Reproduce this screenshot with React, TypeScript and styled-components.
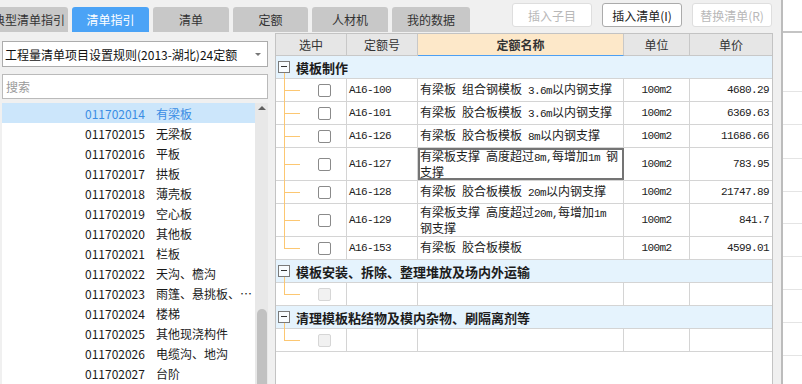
import * as React from 'react';
import styled, { createGlobalStyle } from 'styled-components';

const GlobalStyle = createGlobalStyle`
  html, body {
    margin: 0;
    padding: 0;
  }
  body {
    font-family: "Noto Sans CJK SC", "Liberation Sans", sans-serif;
    font-size: 12px;
    color: #222;
    background: #f0f0f0;
  }
  * {
    box-sizing: border-box;
  }
`;

interface QuotaRow {
  code: string;
  name: string[];
  unit: string;
  price: string;
  tall?: boolean;
  selected?: boolean;
}

interface QuotaGroup {
  title: string;
  rows: QuotaRow[];
}

const tabs = [
  { label: '典型清单指引', w: 78 },
  { label: '清单指引', w: 77, active: true },
  { label: '清单', w: 76 },
  { label: '定额', w: 75 },
  { label: '人材机', w: 76 },
  { label: '我的数据', w: 78 },
];

const items = [
  ['011702014', '有梁板'],
  ['011702015', '无梁板'],
  ['011702016', '平板'],
  ['011702017', '拱板'],
  ['011702018', '薄壳板'],
  ['011702019', '空心板'],
  ['011702020', '其他板'],
  ['011702021', '栏板'],
  ['011702022', '天沟、檐沟'],
  ['011702023', '雨篷、悬挑板、阳台板'],
  ['011702024', '楼梯'],
  ['011702025', '其他现浇构件'],
  ['011702026', '电缆沟、地沟'],
  ['011702027', '台阶'],
];

const groups: QuotaGroup[] = [
  {
    title: '模板制作',
    rows: [
      { code: 'A16-100', name: ['有梁板 组合钢模板 3.6m以内钢支撑'], unit: '100m2', price: '4680.29' },
      { code: 'A16-101', name: ['有梁板 胶合板模板 3.6m以内钢支撑'], unit: '100m2', price: '6369.63' },
      { code: 'A16-126', name: ['有梁板 胶合板模板 8m以内钢支撑'], unit: '100m2', price: '11686.66' },
      {
        code: 'A16-127',
        name: ['有梁板支撑 高度超过8m,每增加1m 钢', '支撑'],
        unit: '100m2',
        price: '783.95',
        tall: true,
        selected: true,
      },
      { code: 'A16-128', name: ['有梁板 胶合板模板 20m以内钢支撑'], unit: '100m2', price: '21747.89' },
      {
        code: 'A16-129',
        name: ['有梁板支撑 高度超过20m,每增加1m', '钢支撑'],
        unit: '100m2',
        price: '841.7',
        tall: true,
      },
      { code: 'A16-153', name: ['有梁板 胶合板模板'], unit: '100m2', price: '4599.01' },
    ],
  },
  { title: '模板安装、拆除、整理堆放及场内外运输', rows: [] },
  { title: '清理模板粘结物及模内杂物、刷隔离剂等', rows: [] },
];

const sideRows = [59, 33, 34, 33, 32, 33, 33, 33, 33];

const Shell = styled.div`
  display: flex;
  width: 802px;
  height: 384px;
  overflow: hidden;
  background: #f0f0f0;
`;

const Main = styled.div`
  display: flex;
  flex-direction: column;
  width: 781px;
  flex-shrink: 0;
`;

const TopBar = styled.div`
  display: flex;
  align-items: flex-start;
  height: 33px;
  padding-right: 9px;
  flex-shrink: 0;
`;

const Tabs = styled.div`
  display: flex;
  gap: 4px;
  margin-top: 7px;
  margin-left: -10px;
`;

const Tab = styled.div<{ $active?: boolean; $w: number }>`
  width: ${(p) => p.$w}px;
  height: 25px;
  display: flex;
  align-items: center;
  justify-content: center;
  flex-shrink: 0;
  border-radius: 3px 3px 0 0;
  background: ${(p) => (p.$active ? '#4ba3f6' : '#c8c8c8')};
  color: ${(p) => (p.$active ? '#fff' : '#333')};
  font-size: 12px;
  white-space: nowrap;
  overflow: hidden;
`;

const Grow = styled.div`
  flex-grow: 1;
`;

const Actions = styled.div`
  display: flex;
  gap: 10px;
  margin-top: 3px;
`;

const ActionButton = styled.button<{ $off?: boolean }>`
  width: 80px;
  height: 24px;
  padding: 0;
  border-radius: 3px;
  border: 1px solid ${(p) => (p.$off ? '#dedede' : '#ababab')};
  background: #fff;
  color: ${(p) => (p.$off ? '#b8b8b8' : '#222')};
  font: 12px "Noto Sans CJK SC", "Liberation Sans", sans-serif;
`;

const Body = styled.div`
  display: flex;
  flex: 1;
  min-height: 0;
`;

const LeftPanel = styled.div`
  width: 275px;
  flex-shrink: 0;
  display: flex;
  flex-direction: column;
  padding: 8px 7px 0 2px;
`;

const Dropdown = styled.div`
  height: 26px;
  display: flex;
  align-items: center;
  justify-content: space-between;
  padding: 0 6px 0 2px;
  border: 1px solid #acacac;
  background: #fff;
  color: #111;
  white-space: nowrap;

  &::after {
    content: '';
    border-left: 3px solid transparent;
    border-right: 3px solid transparent;
    border-top: 3px solid #777;
  }
`;

const Search = styled.input`
  height: 25px;
  margin-top: 7px;
  padding: 0 3px;
  border: 1px solid #bababa;
  background: #fff;
  font: 12px "Noto Sans CJK SC", "Liberation Sans", sans-serif;
  outline: none;

  &::placeholder {
    color: #9a9a9a;
  }
`;

const ListBox = styled.div`
  flex: 1;
  min-height: 0;
  margin-top: 4px;
  display: flex;
  background: #fff;
`;

const ListItems = styled.div`
  flex: 1;
  min-width: 0;
  overflow: hidden;
`;

const ListRow = styled.div<{ $selected?: boolean }>`
  height: 20px;
  display: flex;
  align-items: center;
  padding-left: 83px;
  background: ${(p) => (p.$selected ? '#cce6fb' : 'transparent')};
  color: ${(p) => (p.$selected ? '#3a8de4' : '#1a1a1a')};
  white-space: nowrap;
`;

const ItemCode = styled.span`
  width: 71px;
  flex-shrink: 0;
`;

const ItemName = styled.span`
  flex: 1;
  min-width: 0;
  overflow: hidden;
  text-overflow: ellipsis;
`;

const ScrollTrack = styled.div`
  width: 13px;
  flex-shrink: 0;
  display: flex;
  flex-direction: column;
  align-items: center;
  background: #e8e8e8;
`;

const ScrollArrow = styled.div`
  margin-top: 3px;
  border-left: 4.5px solid transparent;
  border-right: 4.5px solid transparent;
  border-bottom: 4px solid #606060;
`;

const ScrollThumb = styled.div`
  width: 10px;
  height: 120px;
  margin-top: 199px;
  border-radius: 5px 5px 0 0;
  background: #c1c1c1;
`;

const TablePanel = styled.div`
  width: 498px;
  flex-shrink: 0;
  display: flex;
  flex-direction: column;
  background: #fff;
  border-left: 1px solid #c3c3c3;
  border-right: 1px solid #c3c3c3;
`;

const columns = '71px 71px 206px 66px 82px';

const HeaderRow = styled.div`
  display: grid;
  grid-template-columns: ${columns};
  height: 23px;
  border-top: 1px solid #c3c3c3;
  flex-shrink: 0;
`;

const HeadCell = styled.div<{ $focus?: boolean }>`
  display: flex;
  align-items: center;
  justify-content: center;
  background: ${(p) => (p.$focus ? '#fde8c9' : '#e6e6e6')};
  border-right: 1px solid #c8c8c8;
  border-bottom: 1px solid ${(p) => (p.$focus ? '#4d9ff2' : '#c8c8c8')};
  color: #333;
  font-weight: ${(p) => (p.$focus ? 700 : 400)};

  &:last-child {
    border-right: none;
  }
`;

const GroupRow = styled.div`
  position: relative;
  height: 23px;
  display: flex;
  align-items: center;
  gap: 6px;
  padding-left: 2px;
  background: #e5f3fd;
  border-bottom: 1px solid #d4d4d4;
  flex-shrink: 0;

  &::after {
    content: '';
    position: absolute;
    left: 8px;
    top: calc(50% + 6px);
    bottom: -1px;
    width: 1px;
    background: #fcc772;
  }
`;

const MinusBox = styled.span`
  position: relative;
  width: 12px;
  height: 12px;
  border: 1px solid #7a7a7a;
  background: #f8fcff;

  &::after {
    content: '';
    position: absolute;
    left: 2px;
    right: 2px;
    top: 4px;
    height: 1px;
    background: #333;
  }
`;

const GroupTitle = styled.span`
  font-size: 13px;
  font-weight: 700;
  color: #1c1c1c;
  white-space: nowrap;
`;

const Row = styled.div<{ $tall?: boolean }>`
  display: grid;
  grid-template-columns: ${columns};
  height: ${(p) => (p.$tall ? 33 : 23)}px;
  border-bottom: 1px solid #d4d4d4;
  flex-shrink: 0;
`;

const Cell = styled.div`
  display: flex;
  align-items: center;
  min-width: 0;
  border-right: 1px solid #d4d4d4;
  white-space: nowrap;

  &:last-child {
    border-right: none;
  }
`;

const TreeCell = styled(Cell)<{ $last?: boolean }>`
  position: relative;
  padding-left: 42px;

  &::before {
    content: '';
    position: absolute;
    left: 8px;
    top: 0;
    bottom: ${(p) => (p.$last ? '50%' : '-1px')};
    width: 1px;
    background: #fcc772;
  }

  &::after {
    content: '';
    position: absolute;
    left: 8px;
    top: 50%;
    width: 16px;
    height: 1px;
    background: #fcc772;
  }
`;

const Check = styled.span<{ $off?: boolean }>`
  width: 13px;
  height: 13px;
  border-radius: 2px;
  border: 1px solid ${(p) => (p.$off ? '#d6d6d6' : '#8a8a8a')};
  background: ${(p) => (p.$off ? '#f1f1f1' : '#fff')};
`;

const CodeCell = styled(Cell)`
  padding-left: 2px;
`;

const NameCell = styled(Cell)<{ $multi?: boolean; $selected?: boolean }>`
  flex-direction: column;
  justify-content: ${(p) => (p.$multi ? 'flex-start' : 'center')};
  align-items: flex-start;
  padding: ${(p) => (p.$multi ? '1px 2px 0' : '0 2px')};
  line-height: 14px;
  outline: ${(p) => (p.$selected ? '2px solid #747474' : 'none')};
  outline-offset: -2px;
`;

const UnitCell = styled(Cell)`
  justify-content: center;
`;

const PriceCell = styled(Cell)`
  justify-content: flex-end;
  padding-right: 3px;
`;

const Mono = styled.span`
  font-family: "Liberation Mono", monospace;
  font-size: 11px;
  letter-spacing: -0.6px;
`;

const SidePeek = styled.div`
  flex: 1;
  display: flex;
  flex-direction: column;
  border-left: 2px solid #bcbcbc;
  background: #fff;
`;

const SideHead = styled.div`
  height: 33px;
  border-bottom: 2px solid #c4c4c4;
  flex-shrink: 0;
`;

const SideRow = styled.div`
  border-bottom: 1px solid #e4e4e4;
  flex-shrink: 0;
`;

const Mixed: React.FunctionComponent<{ text: string }> = ({ text }) => (
  <span>
    {text.split(/([\x20-\x7e]+)/).map((part, i) =>
      /^[\x20-\x7e]+$/.test(part) ? <Mono key={i}>{part}</Mono> : part
    )}
  </span>
);

const DataRow: React.FunctionComponent<{ row: QuotaRow; last: boolean }> = ({
  row,
  last,
}) => (
  <Row $tall={row.tall}>
    <TreeCell $last={last}>
      <Check />
    </TreeCell>
    <CodeCell>
      <Mono>{row.code}</Mono>
    </CodeCell>
    <NameCell $multi={row.name.length > 1} $selected={row.selected}>
      {row.name.map((line) => (
        <Mixed key={line} text={line} />
      ))}
    </NameCell>
    <UnitCell>
      <Mono>{row.unit}</Mono>
    </UnitCell>
    <PriceCell>
      <Mono>{row.price}</Mono>
    </PriceCell>
  </Row>
);

const BlankRow = () => (
  <Row>
    <TreeCell $last>
      <Check $off />
    </TreeCell>
    <CodeCell />
    <NameCell />
    <UnitCell />
    <PriceCell />
  </Row>
);

export default function App() {
  return (
    <Shell>
      <GlobalStyle />
      <Main>
        <TopBar>
          <Tabs>
            {tabs.map((t) => (
              <Tab key={t.label} $w={t.w} $active={t.active}>
                {t.label}
              </Tab>
            ))}
          </Tabs>
          <Grow />
          <Actions>
            <ActionButton $off>插入子目</ActionButton>
            <ActionButton>插入清单(I)</ActionButton>
            <ActionButton $off>替换清单(R)</ActionButton>
          </Actions>
        </TopBar>
        <Body>
          <LeftPanel>
            <Dropdown>工程量清单项目设置规则(2013-湖北)24定额</Dropdown>
            <Search placeholder="搜索" />
            <ListBox>
              <ListItems>
                {items.map(([code, name], i) => (
                  <ListRow key={code} $selected={i === 0}>
                    <ItemCode>{code}</ItemCode>
                    <ItemName>{name}</ItemName>
                  </ListRow>
                ))}
              </ListItems>
              <ScrollTrack>
                <ScrollArrow />
                <ScrollThumb />
              </ScrollTrack>
            </ListBox>
          </LeftPanel>
          <TablePanel>
            <HeaderRow>
              <HeadCell>选中</HeadCell>
              <HeadCell>定额号</HeadCell>
              <HeadCell $focus>定额名称</HeadCell>
              <HeadCell>单位</HeadCell>
              <HeadCell>单价</HeadCell>
            </HeaderRow>
            {groups.map((g) => (
              <React.Fragment key={g.title}>
                <GroupRow>
                  <MinusBox />
                  <GroupTitle>{g.title}</GroupTitle>
                </GroupRow>
                {g.rows.length ? (
                  g.rows.map((r, i) => (
                    <DataRow key={r.code} row={r} last={i === g.rows.length - 1} />
                  ))
                ) : (
                  <BlankRow />
                )}
              </React.Fragment>
            ))}
          </TablePanel>
        </Body>
      </Main>
      <SidePeek>
        <SideHead />
        {sideRows.map((h, i) => (
          <SideRow key={i} style={{ height: h }} />
        ))}
      </SidePeek>
    </Shell>
  );
}
